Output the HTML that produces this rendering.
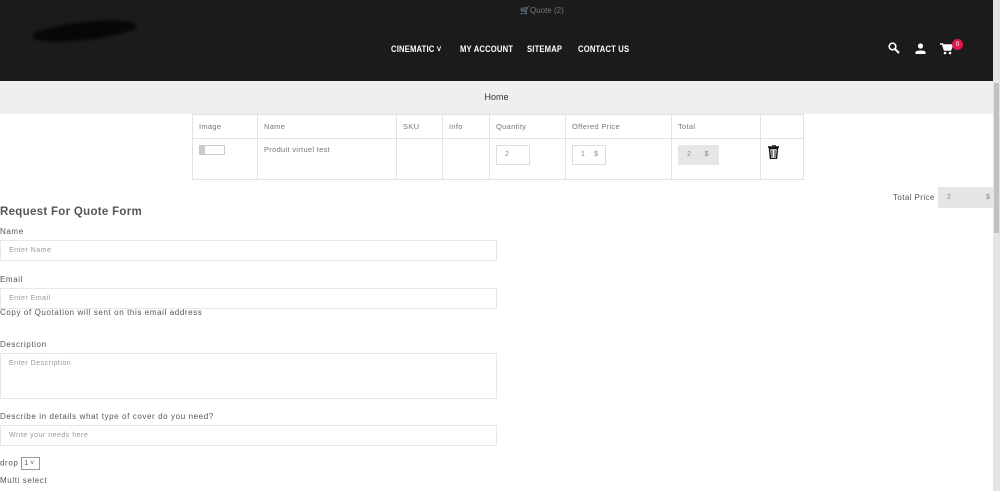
<!DOCTYPE html>
<html><head><meta charset="utf-8"><style>
*{box-sizing:border-box;margin:0;padding:0}
body{width:1000px;height:491px;overflow:hidden;background:#fff;font-family:"Liberation Sans",sans-serif;color:#555;position:relative}
.hdr{position:absolute;left:0;top:0;width:1000px;height:81px;background:#1b1b1b}
.logo{position:absolute;left:32px;top:22px;width:105px;height:18px;background:#070707;border-radius:50%;transform:rotate(-6deg);filter:blur(1.5px)}
.quote{position:absolute;left:520px;top:6px;font-size:8px;color:#777}
.nav{position:absolute;top:44px;font-size:9px;font-weight:bold;color:#fff;letter-spacing:.2px;transform:scaleX(.85);transform-origin:left}
.bc{position:absolute;left:0;top:81px;width:993px;height:33px;background:#efefef;text-align:center;font-size:9px;line-height:33px;color:#333}
.sb{position:absolute;left:993px;top:0;width:7px;height:491px;background:#e4e4e4}
.sb i{position:absolute;left:1px;top:83px;width:5px;height:150px;background:#c1c1c1}
table{position:absolute;left:192px;top:114px;border-collapse:collapse;font-size:7.5px;color:#777;letter-spacing:.3px}
td{border:1px solid #e2e2e2;vertical-align:top;padding:7px 6px}
.box{display:inline-block;border:1px solid #ddd;height:18px;font-size:7px;line-height:16px;padding-left:8px;color:#888}
h2{position:absolute;left:0;top:206px;font-size:11.5px;color:#555;font-weight:bold;letter-spacing:.3px}
.lb{position:absolute;left:0;font-size:8px;color:#555;letter-spacing:.6px}
.in{position:absolute;left:0;width:497px;height:21px;border:1px solid #e8e8e8;font-size:7px;color:#999;padding:6px 0 0 8px;letter-spacing:.5px}
</style></head><body>
<div class="hdr">
 <div class="logo"></div>
 <div class="quote">🛒Quote (2)</div>
 <div class="nav" style="left:391px">CINEMATIC ˅</div>
 <div class="nav" style="left:460px">MY ACCOUNT</div>
 <div class="nav" style="left:527px">SITEMAP</div>
 <div class="nav" style="left:578px">CONTACT US</div>
 <svg style="position:absolute;left:888px;top:42px" width="12" height="12" viewBox="0 0 12 12"><circle cx="4.5" cy="4.5" r="3.3" stroke="#fff" stroke-width="1.6" fill="none"/><path d="M7 7l4 4" stroke="#fff" stroke-width="2"/></svg>
 <svg style="position:absolute;left:915px;top:43px" width="11" height="11" viewBox="0 0 11 11"><circle cx="5.5" cy="3" r="2.6" fill="#fff"/><path d="M0.5 11v-2c0-2 10-2 10 0v2z" fill="#fff"/></svg>
 <svg style="position:absolute;left:940px;top:43px" width="13" height="12" viewBox="0 0 13 12"><path d="M0 1h2.5l2 6h6l2-5h-9" stroke="#fff" stroke-width="1.6" fill="#fff"/><circle cx="5" cy="10" r="1.3" fill="#fff"/><circle cx="10" cy="10" r="1.3" fill="#fff"/></svg>
 <div style="position:absolute;left:952px;top:39px;width:11px;height:11px;border-radius:50%;background:#e0174a;color:#fff;font-size:6.5px;text-align:center;line-height:11px">0</div>
</div>
<div class="bc">Home</div>
<table>
<tr style="height:23px"><td style="width:65px">Image</td><td style="width:139px">Name</td><td style="width:46px">SKU</td><td style="width:47px">Info</td><td style="width:76px">Quantity</td><td style="width:106px">Offered Price</td><td style="width:89px">Total</td><td style="width:43px"></td></tr>
<tr style="height:41px"><td style="padding-top:6px"><span style="display:inline-block;width:26px;height:10px;border:1px solid #ccc;border-left-width:6px"></span></td><td style="padding-top:6px">Produit virtuel test</td><td></td><td></td><td style="padding-top:6px"><span class="box" style="width:34px;height:20px;line-height:18px">2</span></td><td style="padding-top:6px"><span class="box" style="width:34px;height:20px;line-height:18px">1&nbsp;&nbsp;&nbsp;&nbsp;$</span></td><td style="padding-top:6px"><span class="box" style="width:41px;height:20px;line-height:18px;background:#e6e6e6;border-color:#e6e6e6">2&nbsp;&nbsp;&nbsp;&nbsp;&nbsp;&nbsp;$</span></td><td style="padding-top:6px;padding-left:7px"><svg width="11" height="14" viewBox="0 0 11 14"><path d="M0 2h11M4 0h3v2M1.5 3.5l1 10h6l1-10z" stroke="#111" stroke-width="1.4" fill="none"/><path d="M4 5v7M7 5v7" stroke="#111"/></svg></td></tr>
</table>
<div style="position:absolute;left:893px;top:193px;font-size:8px;color:#555;letter-spacing:.4px">Total Price</div>
<div style="position:absolute;left:938px;top:187px;width:55px;height:21px;background:#e6e6e6;font-size:7px;color:#888;line-height:21px;padding-left:9px">2<span style="position:absolute;left:48px">$</span></div>
<h2>Request For Quote Form</h2>
<div class="lb" style="top:227px">Name</div>
<div class="in" style="top:240px">Enter Name</div>
<div class="lb" style="top:275px">Email</div>
<div class="in" style="top:288px">Enter Email</div>
<div class="lb" style="top:308px">Copy of Quotation will sent on this email address</div>
<div class="lb" style="top:340px">Description</div>
<div class="in" style="top:353px;height:46px">Enter Description</div>
<div class="lb" style="top:412px">Describe in details what type of cover do you need?</div>
<div class="in" style="top:425px">Write your needs here</div>
<div class="lb" style="top:457px">drop <span style="display:inline-block;border:1px solid #999;width:19px;height:13px;font-size:7px;vertical-align:middle;padding-left:2px;line-height:11px;letter-spacing:0">1 ˅</span></div>
<div class="lb" style="top:476px">Multi select</div>
<div class="sb"><i></i></div>
</body></html>
